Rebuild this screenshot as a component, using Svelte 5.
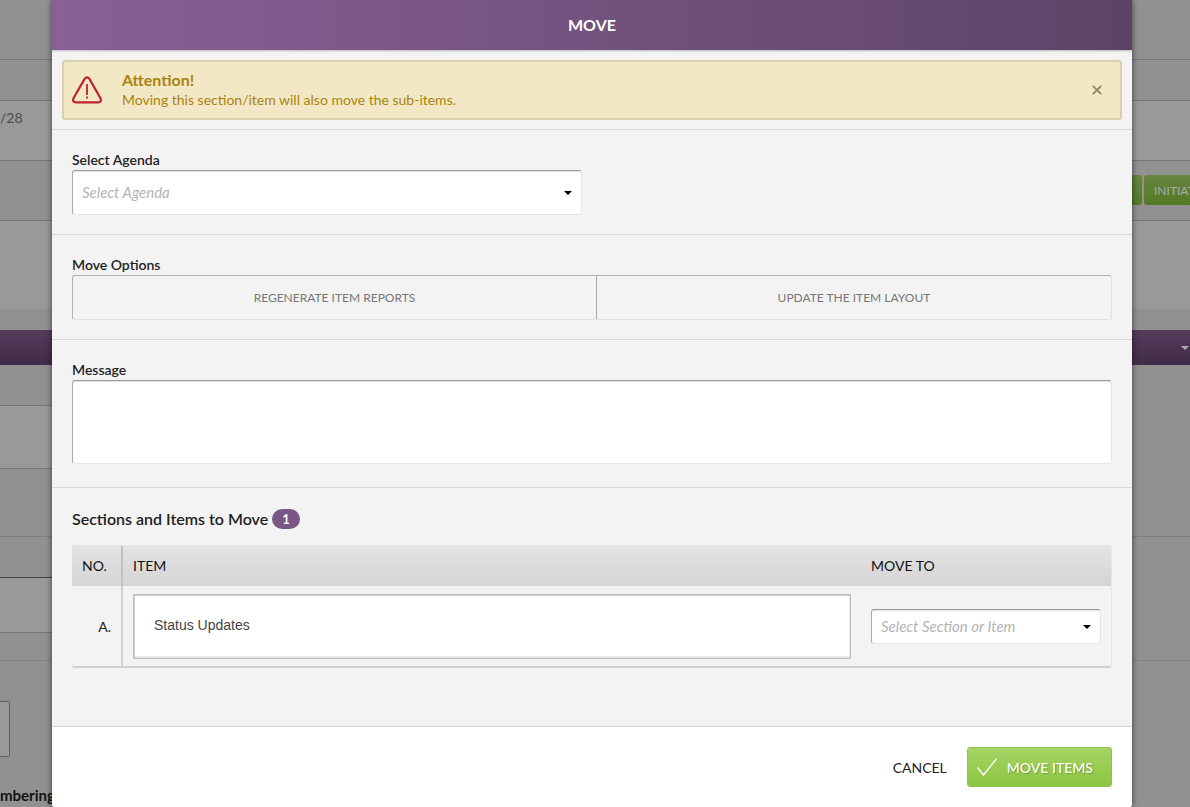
<script lang="ts">
	interface MoveItem {
		no: string;
		title: string;
		target: string;
	}

	let agenda = $state('');
	let message = $state('');
	let options = $state([
		{ label: 'Regenerate item reports', active: false },
		{ label: 'Update the item layout', active: false }
	]);
	let items = $state<MoveItem[]>([{ no: 'A.', title: 'Status Updates', target: '' }]);
	let showAlert = $state(true);
</script>

{#snippet caret()}
	<svg class="caret" width="8" height="4" viewBox="0 0 8 4" aria-hidden="true">
		<path d="M0 0h8L4 4z" fill="currentColor" />
	</svg>
{/snippet}

<div class="page">
	<div class="backdrop" inert>
		<div class="line h60"></div>
		<div class="line h41"></div>
		<div class="line light h60 date">/28</div>
		<div class="line h60 actions">
			<button class="bg-btn">Save</button>
			<button class="bg-btn last">INITIATE</button>
		</div>
		<div class="light h88"></div>
		<div class="gap"></div>
		<div class="bar">{@render caret()}</div>
		<div class="columns">
			<div class="left">
				<div class="line h41"></div>
				<div class="line light h63"></div>
				<div class="line faint h68"></div>
				<div class="line strong h41"></div>
				<div class="line light h55"></div>
				<div class="line faint h28"></div>
				<div class="box"></div>
				<strong>mbering</strong>
			</div>
			<div class="right">
				<div class="line faint h172"></div>
				<div class="line faint h124"></div>
			</div>
		</div>
	</div>

	<div class="overlay">
		<div class="modal" role="dialog" aria-labelledby="modal-title">
			<header><h1 id="modal-title">MOVE</h1></header>

			<div class="body">
				{#if showAlert}
					<div class="alert-row">
						<div class="alert" role="alert">
							<svg class="warning" width="30" height="28" viewBox="0 0 30 28" fill="none" stroke="#c0202f" aria-hidden="true">
								<path d="M12.6 2.9Q15 -.2 17.4 2.9L28.4 22Q30 26.2 26 26.4H4Q0 26.2 1.6 22Z" stroke-width="2.2" stroke-linejoin="round" />
								<path d="M15 8v11M15 20.5v2" stroke-width="1.8" />
							</svg>
							<div class="alert-text">
								<strong>Attention!</strong>
								<p>Moving this section/item will also move the sub-items.</p>
							</div>
							<button class="close" aria-label="Close" onclick={() => (showAlert = false)}>
								<svg width="10" height="10" viewBox="0 0 10 10" stroke="#8f8768" stroke-width="1.8" aria-hidden="true">
									<path d="M.8.8l8.4 8.4M9.2.8L.8 9.2" />
								</svg>
							</button>
						</div>
					</div>
				{/if}

				<section>
					<label for="agenda">Select Agenda</label>
					<div class="select-wrap half">
						<select id="agenda" bind:value={agenda}>
							<option value="">Select Agenda</option>
						</select>
						{@render caret()}
					</div>
				</section>

				<section>
					<div class="label" id="options-label">Move Options</div>
					<div class="toggles" role="group" aria-labelledby="options-label">
						{#each options as option}
							<button
								class:active={option.active}
								aria-pressed={option.active}
								onclick={() => (option.active = !option.active)}
							>
								{option.label}
							</button>
						{/each}
					</div>
				</section>

				<section class="message">
					<label for="message">Message</label>
					<textarea id="message" bind:value={message}></textarea>
				</section>

				<section class="items">
					<h2>Sections and Items to Move <span class="badge">{items.length}</span></h2>
					<div class="table-wrap">
						<table>
							<thead>
								<tr>
									<th class="no">NO.</th>
									<th>ITEM</th>
									<th class="target">MOVE TO</th>
								</tr>
							</thead>
							<tbody>
								{#each items as item}
									<tr>
										<td class="no">{item.no}</td>
										<td><input type="text" aria-label="Item" bind:value={item.title} /></td>
										<td class="target">
											<div class="select-wrap small">
												<select aria-label="Move to" bind:value={item.target}>
													<option value="">Select Section or Item</option>
												</select>
												{@render caret()}
											</div>
										</td>
									</tr>
								{/each}
							</tbody>
						</table>
					</div>
				</section>
			</div>

			<footer>
				<button class="cancel">CANCEL</button>
				<button class="submit">
					<svg width="20" height="18" viewBox="0 0 20 18" fill="none" stroke="#fff" stroke-width="1.4" aria-hidden="true">
						<path d="M.5 9.5L6.5 17L19.5 .7" />
					</svg>
					MOVE ITEMS
				</button>
			</footer>
		</div>
	</div>
</div>

<style>
	:global(body) {
		margin: 0;
		background: #919191;
	}
	* {
		box-sizing: border-box;
	}
	.page {
		position: relative;
		min-height: 100vh;
		overflow: hidden;
		font-family: Lato, 'Liberation Sans', sans-serif;
		font-size: 14px;
		line-height: 20px;
		color: #222;
	}
	button,
	select,
	textarea {
		font-family: inherit;
	}
	button {
		cursor: pointer;
	}

	/* page behind the dialog */
	.backdrop {
		position: absolute;
		inset: 0;
		overflow: hidden;
		background: #919191;
	}
	.line {
		border-bottom: 1px solid #777;
	}
	.line.faint {
		border-color: #808080;
	}
	.line.strong {
		border-color: #444;
	}
	.light {
		background: #999;
	}
	.h28 { height: 28px; }
	.h41 { height: 41px; }
	.h55 { height: 55px; }
	.h60 { height: 60px; }
	.h63 { height: 63px; }
	.h68 { height: 68px; }
	.h88 { height: 88px; }
	.h124 { height: 124px; }
	.h172 { height: 172px; }
	.date {
		padding-top: 7px;
		color: #4d4d4d;
	}
	.actions {
		display: flex;
		justify-content: flex-end;
		align-items: flex-start;
		gap: 2px;
		padding-top: 14px;
	}
	.bg-btn {
		height: 30px;
		width: 80px;
		padding: 0 10px;
		border: 0;
		border-radius: 3px;
		background: linear-gradient(#67853f, #547a26);
		color: #aaa;
		font-size: 12px;
		text-align: left;
	}
	.bg-btn.last {
		width: 66px;
		margin-right: -20px;
	}
	.gap {
		height: 21px;
	}
	.bar {
		display: flex;
		justify-content: flex-end;
		align-items: center;
		height: 35px;
		padding-right: 1px;
		background: linear-gradient(#553c5d, #402c47);
		color: #aaa;
	}
	.columns {
		display: flex;
		justify-content: space-between;
	}
	.left,
	.right {
		width: 80px;
	}
	.box {
		width: 10px;
		height: 56px;
		margin: 40px 0 28px;
		border: 1px solid #606060;
		border-left: 0;
		border-radius: 0 2px 2px 0;
		background: #999;
	}
	.left strong {
		font-size: 15px;
		color: #111;
	}

	.overlay {
		position: relative;
		display: flex;
		padding: 0 58px 0 52px;
	}
	.modal {
		flex: 1;
		min-width: 0;
		border-radius: 0 0 3px 3px;
		background: #f3f3f3;
		box-shadow: 0 0 6px rgba(0, 0, 0, 0.6);
		overflow: hidden;
	}
	header {
		position: relative;
		padding: 15px;
		background: linear-gradient(to right, #886197, #5e4366);
		box-shadow: 0 1px 2px rgba(0, 0, 0, 0.25);
	}
	h1 {
		margin: 0;
		color: #fff;
		font-size: 16px;
		line-height: 20px;
		text-align: center;
	}

	.alert-row {
		padding: 10px 10px 9px;
		border-bottom: 1px solid #d9d9d9;
	}
	.alert {
		display: flex;
		align-items: center;
		height: 60px;
		padding: 0 18px 0 8px;
		border: 2px solid #dacfae;
		border-radius: 3px;
		background: #f2e8c6;
		color: #aa840a;
	}
	.alert-text {
		flex: 1;
		margin-left: 20px;
	}
	.alert-text strong {
		display: block;
		font-size: 16px;
	}
	.alert-text p {
		margin: 0;
	}
	.close {
		display: flex;
		padding: 0;
		border: 0;
		background: none;
	}

	section {
		padding: 20px 20px 19px;
		border-bottom: 1px solid #d9d9d9;
	}
	label,
	.label {
		display: block;
		font-weight: 600;
	}
	.select-wrap {
		position: relative;
	}
	.select-wrap.half {
		width: 49%;
	}
	.select-wrap .caret {
		position: absolute;
		top: calc(50% - 2px);
		right: 10px;
		color: #000;
		pointer-events: none;
	}
	select,
	textarea {
		display: block;
		width: 100%;
		border: 1px solid #e6e6e6;
		border-top-color: #999;
		border-left-color: #aaa;
		border-radius: 3px;
		background: #fff;
		box-shadow: inset 0 1px 1px rgba(0, 0, 0, 0.12);
	}
	select {
		height: 45px;
		padding: 0 30px 2px 9px;
		appearance: none;
		color: #b3b3b3;
		font-size: 15px;
		font-style: italic;
	}
	.small select {
		height: 35px;
	}
	textarea {
		height: 84px;
		padding: 8px;
		resize: none;
	}
	.message {
		padding-bottom: 23px;
	}
	.toggles {
		display: flex;
		border: 1px solid #e2e2e2;
		border-top-color: #b0b0b0;
		border-left-color: #b0b0b0;
		border-radius: 3px;
	}
	.toggles button {
		flex: 1 1 auto;
		height: 43px;
		padding: 0;
		border: 0;
		background: none;
		color: #777;
		font-size: 12px;
		text-transform: uppercase;
	}
	.toggles button + button {
		border-left: 1px solid #aaa;
	}
	.toggles button.active {
		background: #e0e0e0;
	}

	.items {
		padding-bottom: 58px;
		border-bottom: 0;
	}
	h2 {
		display: flex;
		align-items: center;
		gap: 4px;
		margin: 0 0 16px;
		font-size: 16px;
		font-weight: 600;
		line-height: 21px;
	}
	.badge {
		padding: 0 10px;
		border-radius: 10px;
		background: #785685;
		color: #fff;
		font-size: 13px;
		font-weight: 700;
		line-height: 20px;
	}
	.table-wrap {
		border: 1px solid #e6e6e6;
		border-bottom: 2px solid #cfcfcf;
		border-left: 0;
		border-radius: 3px;
	}
	table {
		width: 100%;
		border-collapse: separate;
		border-spacing: 0;
	}
	thead {
		background: linear-gradient(#e3e3e3, #d5d5d5);
		color: #111;
	}
	th {
		height: 40px;
		padding: 0 10px;
		font-weight: 400;
		text-align: left;
	}
	td {
		padding: 8px 10px 7px;
	}
	.no {
		width: 51px;
		border-right: 2px solid #d2d2d2;
	}
	th.no {
		border-color: #c2c2c2;
	}
	td.no {
		text-align: right;
	}
	.target {
		width: 250px;
	}
	input {
		display: block;
		width: 100%;
		height: 65px;
		padding: 0 20px 4px;
		border: 1px solid #bbb;
		border-radius: 0;
		background: #fff;
		box-shadow: inset 1px 1px 0 #d0d0d0, inset -1px -2px 0 #e8e8e8;
		color: #444;
		font-family: 'Liberation Sans', Arial, sans-serif;
		font-size: 14px;
	}

	footer {
		display: flex;
		justify-content: flex-end;
		gap: 20px;
		padding: 20px;
		border-top: 1px solid #d5d5d5;
		background: #fff;
	}
	.cancel {
		padding: 0;
		border: 0;
		background: none;
		color: #222;
		font-size: 14px;
	}
	.submit {
		display: flex;
		align-items: center;
		gap: 10px;
		height: 40px;
		padding: 0 18px 0 9px;
		border: 1px solid #8fc24a;
		border-radius: 3px;
		background: linear-gradient(#a6d366, #8cc63e);
		color: #fff;
		font-size: 14px;
		font-weight: 500;
		text-shadow: 1px 1px 1px rgba(0, 0, 0, 0.25);
	}
</style>
